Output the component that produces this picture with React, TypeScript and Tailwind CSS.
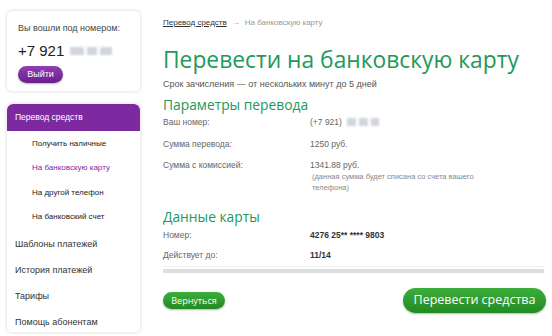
import React from 'react';

const sub = ['Получить наличные', 'На банковскую карту', 'На другой телефон', 'На банковский счет'];
const menu = ['Шаблоны платежей', 'История платежей', 'Тарифы', 'Помощь абонентам'];

function Blur({ w }: { w: number }) {
  return <span className="inline-block h-[8px] bg-gray-300 blur-[1px] align-middle mr-[3px]" style={{ width: w }} />;
}

export default function App() {
  return (
    <div className="w-[552px] h-[336px] bg-white flex overflow-hidden text-[#333]" style={{ fontFamily: '"Liberation Sans", Arial, sans-serif' }}>
      <aside className="w-[135px] ml-[6px] shrink-0 flex flex-col">
        <div className="mt-[10px] h-[82px] rounded-[6px] border border-[#eee] shadow-[0_0_3px_rgba(0,0,0,0.12)] px-[11px] pt-[11px]">
          <div className="text-[9px] text-[#444]">Вы вошли под номером:</div>
          <div className="mt-[6px] text-[15px] leading-[18px] text-[#222] flex items-center">
            +7 921 <span className="ml-[6px] inline-flex"><Blur w={14} /><Blur w={10} /><Blur w={12} /></span>
          </div>
          <button className="mt-[6px] h-[17px] w-[45px] rounded-full bg-gradient-to-b from-[#8e3fb3] to-[#6a1f8c] text-white text-[9px] shadow-[0_1px_2px_rgba(0,0,0,0.3)]">Выйти</button>
        </div>
        <div className="mt-[11px] h-[230px] rounded-[6px] border border-[#eee] shadow-[0_0_3px_rgba(0,0,0,0.12)] overflow-hidden">
          <div className="h-[27px] bg-[#7d2aa0] rounded-t-[6px] text-white text-[8.5px] flex items-center px-[8px]">Перевод средств</div>
          <ul className="pt-[1px]">
            {sub.map((s, i) => (
              <li key={s} className={`h-[24.3px] flex items-center pl-[25px] text-[8px] ${i === 1 ? 'text-[#7d2aa0]' : 'text-[#222]'}`}>{s}</li>
            ))}
          </ul>
          <ul className="pt-[2px]">
            {menu.map((m) => (
              <li key={m} className="h-[26.3px] flex items-center pl-[8px] text-[9px] text-[#333]">{m}</li>
            ))}
          </ul>
        </div>
      </aside>
      <main className="ml-[22px] w-[381px] pt-[17px]">
        <div className="text-[8px] leading-[12px] text-[#999] flex items-center gap-[5px]">
          <span className="text-[#333] underline">Перевод средств</span>
          <span>→</span>
          <span>На банковскую карту</span>
        </div>
        <h1 className="mt-[17px] text-[22.8px] leading-[28px] text-[#22995a] whitespace-nowrap" style={{ fontFamily: '"Open Sans", sans-serif' }}>Перевести на банковскую карту</h1>
        <div className="mt-[4px] text-[9px] leading-[13px] text-[#555]">Срок зачисления — от нескольких минут до 5 дней</div>
        <h2 className="mt-[6px] text-[13.8px] leading-[16px] text-[#22995a]" style={{ fontFamily: '"Open Sans", sans-serif' }}>Параметры перевода</h2>
        <div className="-mt-[2px] text-[8.5px] text-[#666]">
          <div className="flex h-[22px] items-center"><span className="w-[147px]">Ваш номер:</span><span className="flex items-center">(+7 921)<span className="ml-[5px] inline-flex"><Blur w={9} /><Blur w={9} /><Blur w={8} /></span></span></div>
          <div className="flex h-[22px] items-center"><span className="w-[147px]">Сумма перевода:</span><span>1250 руб.</span></div>
          <div className="flex pt-[5px] leading-[10px]"><span className="w-[147px]">Сумма с комиссией:</span>
            <div>
              <div>1341.88 руб.</div>
              <div className="pl-[2px] mt-[1px] text-[7.5px] leading-[11px] text-[#888] w-[190px]">(данная сумма будет списана со счета вашего телефона)</div>
            </div>
          </div>
        </div>
        <h2 className="mt-[15px] text-[13.8px] leading-[18px] text-[#22995a]" style={{ fontFamily: '"Open Sans", sans-serif' }}>Данные карты</h2>
        <div className="text-[8.5px] text-[#666]">
          <div className="flex h-[19px] items-center"><span className="w-[147px]">Номер:</span><span className="font-bold text-[#333]">4276 25** **** 9803</span></div>
          <div className="flex h-[22px] items-center border-b border-[#f0f0f0]"><span className="w-[147px]">Действует до:</span><span className="font-bold text-[#333]">11/14</span></div>
        </div>
        <div className="mt-[2px] h-[4px] bg-[#ddd] rounded-[1px]" />
        <div className="mt-[15px] flex items-center justify-between">
          <button className="h-[17px] w-[62px] rounded-full bg-gradient-to-b from-[#3cae3c] to-[#228a22] text-white text-[9px] shadow-[0_1px_2px_rgba(0,0,0,0.3)]" style={{ fontFamily: '"Open Sans", sans-serif' }}>Вернуться</button>
          <button className="h-[25px] w-[143px] -mr-[2px] rounded-full bg-gradient-to-b from-[#3cae3c] to-[#228a22] text-white text-[12.5px] shadow-[0_1px_2px_rgba(0,0,0,0.3)]" style={{ fontFamily: '"Open Sans", sans-serif' }}>Перевести средства</button>
        </div>
      </main>
    </div>
  );
}
